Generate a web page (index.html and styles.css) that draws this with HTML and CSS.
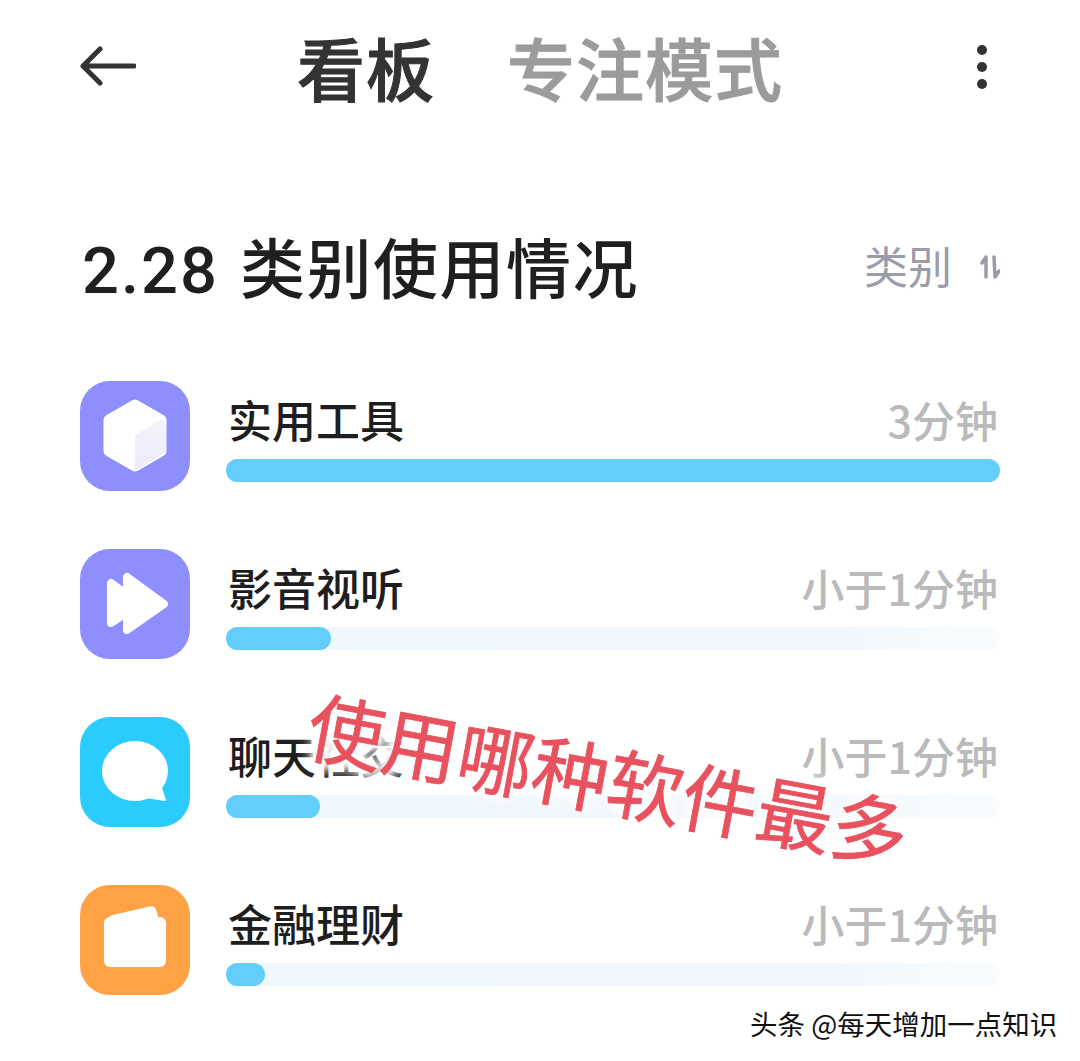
FILE: index.html
```html
<!DOCTYPE html>
<html lang="zh-CN">
<head>
<meta charset="utf-8">
<title>看板</title>
<link rel="stylesheet" href="styles.css">
</head>
<body>
<div class="page">
    <header class="topbar">
        <svg class="back" viewBox="0 0 56 40" fill="none" stroke="#333" stroke-width="5" stroke-linecap="round" stroke-linejoin="round">
            <path d="M54 20 H3 M20 3 L3 20 L20 37"/>
        </svg>
        <nav class="tabs">
            <span class="tab tab-active">看板</span>
            <span class="tab">专注模式</span>
        </nav>
        <div class="more"><i></i><i></i><i></i></div>
    </header>

    <section class="summary">
        <div class="summary-head">
            <h1><span class="num">2.28</span>类别使用情况</h1>
            <div class="sort">
                <span>类别</span>
                <svg viewBox="0 0 20 26" fill="none" stroke="#9a9caa" stroke-width="3.5" stroke-linecap="round" stroke-linejoin="round">
                    <path d="M6 23 V3 L2 9 M14 3 L15 23 L19 17"/>
                </svg>
            </div>
        </div>

        <div class="row">
            <div class="icon icon-tools">
                <svg viewBox="0 0 110 110">
                    <defs>
                        <linearGradient id="cube-side" x1="0" y1="0" x2="0" y2="1">
                            <stop offset="0" stop-color="#f4f4fc"/>
                            <stop offset="1" stop-color="#e9ebfa"/>
                        </linearGradient>
                    </defs>
                    <path d="M55 24 L81 39 V70 L55 85 L29 70 V39 Z" fill="#fff" stroke="#fff" stroke-width="11" stroke-linejoin="round"/>
                    <path d="M55 54 L82 38 Q86 42 86 46 V67 Q86 71 82 73 L58 88 Q55 89 55 88 Z" fill="url(#cube-side)"/>
                </svg>
            </div>
            <div class="row-body">
                <div class="row-text"><span class="name">实用工具</span><span class="time">3分钟</span></div>
                <div class="track track-full"><div class="fill" style="width: 100%"></div></div>
            </div>
        </div>

        <div class="row">
            <div class="icon icon-media">
                <svg viewBox="0 0 110 110" fill="#fff" stroke="#fff" stroke-width="8" stroke-linejoin="round">
                    <path d="M31 34 V74 L60 55 Z"/>
                    <path d="M47 28 V81 L84 55 Z"/>
                </svg>
            </div>
            <div class="row-body">
                <div class="row-text"><span class="name">影音视听</span><span class="time">小于1分钟</span></div>
                <div class="track"><div class="fill" style="width: 13.6%"></div></div>
            </div>
        </div>

        <div class="row">
            <div class="icon icon-chat">
                <svg viewBox="0 0 110 110" fill="#fff">
                    <ellipse cx="55" cy="54" rx="33" ry="30"/>
                    <path d="M78 62 L85 83 L66 80 Z" stroke="#fff" stroke-width="2" stroke-linejoin="round"/>
                </svg>
            </div>
            <div class="row-body">
                <div class="row-text"><span class="name">聊天社交</span><span class="time">小于1分钟</span></div>
                <div class="track"><div class="fill" style="width: 12.2%"></div></div>
            </div>
        </div>

        <div class="row">
            <div class="icon icon-money">
                <svg viewBox="0 0 110 110" fill="#fff">
                    <path d="M31 32 L70 23 Q74 22 75 26 L77 33 Z" stroke="#fff" stroke-width="3" stroke-linejoin="round"/>
                    <rect x="24" y="32" width="62" height="50" rx="6"/>
                </svg>
            </div>
            <div class="row-body">
                <div class="row-text"><span class="name">金融理财</span><span class="time">小于1分钟</span></div>
                <div class="track"><div class="fill" style="width: 5%"></div></div>
            </div>
        </div>
    </section>

    <div class="stamp">使用哪种软件最多</div>
    <div class="credit">头条 @每天增加一点知识</div>
</div>
</body>
</html>
```

FILE: styles.css
```css
html, body {
    margin: 0;
    background: #fff;
}

.page {
    position: relative;
    width: 1080px;
    height: 1061px;
    overflow: hidden;
    padding: 0 80px;
    box-sizing: border-box;
    font-family: "Noto Sans CJK SC", "Noto Sans", sans-serif;
    color: #1d1d1f;
}

.topbar {
    display: flex;
    align-items: center;
    height: 134px;
}
.back {
    width: 56px;
    height: 40px;
    flex: none;
    margin-top: -2px;
}
.tabs {
    display: flex;
    gap: 72px;
    margin-left: 161px;
    flex: 1;
}
.tab {
    font-size: 68px;
    font-weight: 500;
    line-height: 80px;
    letter-spacing: 1px;
    color: #9b9b9b;
    -webkit-text-stroke: 1px currentColor;
}
.tab-active {
    color: #333;
}
.more {
    display: flex;
    flex-direction: column;
    gap: 7px;
    margin-right: 13px;
}
.more i {
    display: block;
    width: 10px;
    height: 10px;
    border-radius: 50%;
    background: #333;
}

.summary-head {
    display: flex;
    justify-content: space-between;
    align-items: center;
    margin-top: 88px;
    margin-bottom: 67px;
    height: 92px;
}
h1 {
    margin: 0 0 0 2px;
    font-size: 65px;
    font-weight: 500;
    line-height: 92px;
    letter-spacing: 1.5px;
    color: #1f1f21;
}
.num {
    font-family: "Roboto", sans-serif;
    letter-spacing: 2px;
    margin-right: 21px;
}
.sort {
    display: flex;
    align-items: center;
    gap: 28px;
    font-size: 44px;
    color: #9a9caa;
    margin-top: -6px;
}
.sort svg {
    width: 20px;
    height: 26px;
    margin-top: 4px;
}

.row {
    display: flex;
    height: 110px;
    margin-bottom: 58px;
}
.icon {
    width: 110px;
    height: 110px;
    border-radius: 30px;
    flex: none;
}
.icon svg {
    display: block;
    width: 110px;
    height: 110px;
}
.icon-tools, .icon-media {
    background: #8f8eff;
}
.icon-chat {
    background: #2ccbfd;
}
.icon-money {
    background: #ffa245;
}

.row-body {
    flex: 1;
    margin-left: 36px;
    display: flex;
    flex-direction: column;
    justify-content: flex-end;
    padding-bottom: 9px;
}
.row-text {
    display: flex;
    justify-content: space-between;
    align-items: center;
    padding: 0 2px;
    margin-bottom: 10px;
    height: 60px;
}
.name {
    font-size: 44px;
    font-weight: 500;
    color: #1e1e20;
}
.time {
    font-size: 43px;
    font-weight: 500;
    color: #bababa;
}

.track {
    height: 23px;
    border-radius: 12px;
    background: linear-gradient(90deg, #eff8fd 0%, #f1f8fd 80%, #f9fcfe 100%);
}
.fill {
    height: 100%;
    border-radius: 12px;
    background: #63cdfb;
}

/* red caption and watermark sit over the list */
.stamp {
    position: absolute;
    left: 318px;
    top: 677px;
    font-size: 76px;
    line-height: 90px;
    white-space: nowrap;
    color: #e8525f;
    -webkit-text-stroke: 0.8px #e8525f;
    transform: rotate(10.5deg);
    transform-origin: 0 0;
    text-shadow: 0 0 8px #fff, 0 0 8px #fff, 0 0 8px #fff, 0 0 14px #fff, 0 0 14px #fff, 0 0 14px #fff, 0 0 20px #fff, 0 0 20px #fff;
}
.credit {
    position: absolute;
    left: 750px;
    top: 1004px;
    font-size: 27.5px;
    line-height: 38px;
    white-space: nowrap;
    color: #111;
    text-shadow: 1px 1px 0 #fff;
}
```
